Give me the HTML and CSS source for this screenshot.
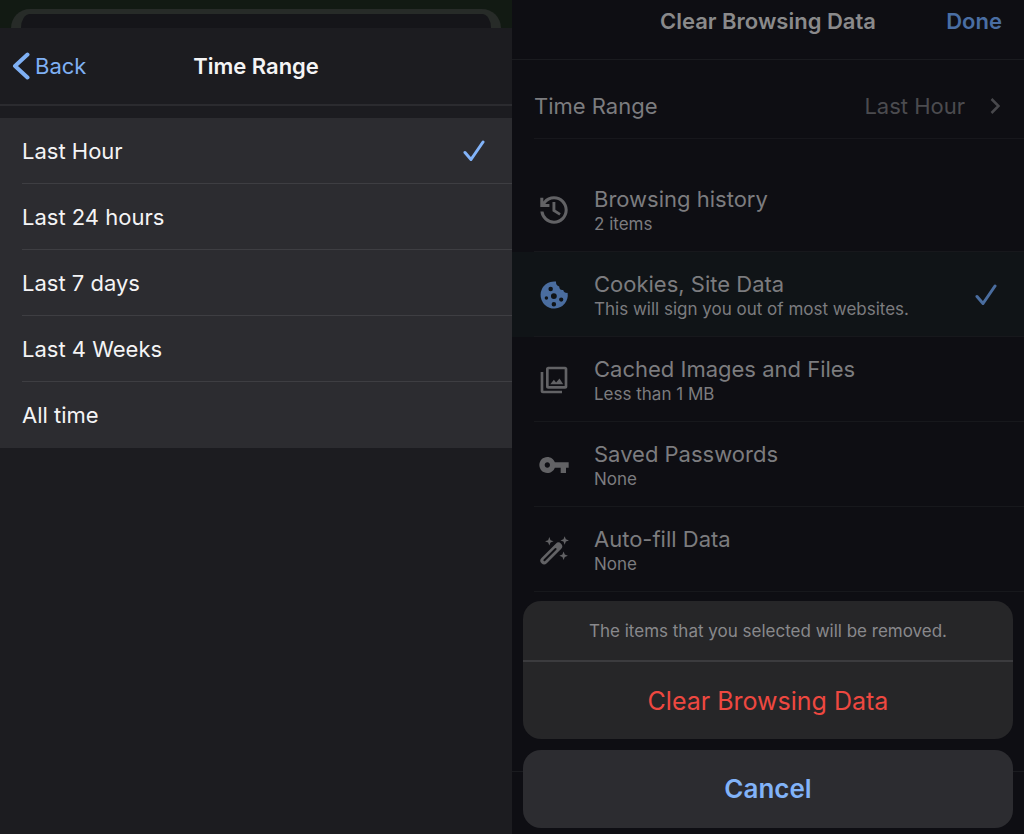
FILE: index.html
```html
<!DOCTYPE html>
<html lang="en">
<head>
    <meta charset="UTF-8">
    <meta name="viewport" content="width=device-width, initial-scale=1.0">
    <title>Clear Browsing Data</title>
    <link rel="stylesheet" href="styles.css">
</head>
<body>

    <section class="screen range-screen" id="range">
        <div class="backdrop"><div class="backdrop-card"></div></div>
        <header class="range-nav">
            <a class="back" href="#clear">
                <svg width="18" height="28" viewBox="0 0 18 28" aria-hidden="true"><path d="M15.5 2.5L3 14l12.5 11.5" fill="none" stroke="currentColor" stroke-width="4" stroke-linecap="round" stroke-linejoin="round"/></svg>
                Back
            </a>
            <h1>Time Range</h1>
        </header>
        <form class="range-list">
            <label class="range-row">
                <span>Last Hour</span>
                <input type="radio" name="range" checked>
                <svg class="tick" viewBox="0 0 22 22" aria-hidden="true"><path d="M2 12.5l6 7L20 2"/></svg>
            </label>
            <label class="range-row">
                <span>Last 24 hours</span>
                <input type="radio" name="range">
                <svg class="tick" viewBox="0 0 22 22" aria-hidden="true"><path d="M2 12.5l6 7L20 2"/></svg>
            </label>
            <label class="range-row">
                <span>Last 7 days</span>
                <input type="radio" name="range">
                <svg class="tick" viewBox="0 0 22 22" aria-hidden="true"><path d="M2 12.5l6 7L20 2"/></svg>
            </label>
            <label class="range-row">
                <span>Last 4 Weeks</span>
                <input type="radio" name="range">
                <svg class="tick" viewBox="0 0 22 22" aria-hidden="true"><path d="M2 12.5l6 7L20 2"/></svg>
            </label>
            <label class="range-row">
                <span>All time</span>
                <input type="radio" name="range">
                <svg class="tick" viewBox="0 0 22 22" aria-hidden="true"><path d="M2 12.5l6 7L20 2"/></svg>
            </label>
        </form>
    </section>

    <section class="screen clear-screen" id="clear">
        <header class="clear-nav">
            <h2>Clear Browsing Data</h2>
            <button class="done" type="button">Done</button>
        </header>
        <a class="range-link" href="#range">
            <span>Time Range</span>
            <span class="value">Last Hour</span>
            <svg width="10" height="18" viewBox="0 0 10 18" aria-hidden="true"><path d="M1.5 2l7 7-7 7" fill="none" stroke="currentColor" stroke-width="2.5"/></svg>
        </a>
        <form class="data-list">
            <label class="data-row">
                <svg class="icon" viewBox="60 -900 840 840" aria-hidden="true"><path d="M480-120q-138 0-240.5-91.5T122-440h82q14 104 92.500 172T480-200q117 0 198.500-81.500T760-480q0-117-81.500-198.500T480-760q-69 0-129 32t-101 88h110v80H120v-240h80v94q51-64 124.500-99T480-840q75 0 140.500 28.500t114 77q48.500 48.500 77 114T840-480q0 75-28.500 140.500t-77 114q-48.500 48.500-114 77T480-120ZM440-690h76v206l142 88-38 60-180-110z"/></svg>
                <span class="text">
                    <span class="name">Browsing history</span>
                    <span class="note">2 items</span>
                </span>
                <input type="checkbox">
                <svg class="tick" viewBox="0 0 22 22" aria-hidden="true"><path d="M2 12.5l6 7L20 2"/></svg>
            </label>
            <label class="data-row">
                <svg class="icon" viewBox="0 0 24 24" aria-hidden="true"><path fill-rule="evenodd" d="M22.2 10.4A10.2 10.2 0 1 1 13.5 1.9c-.2 2 .7 3.4 2.4 3.7.1 2 1.3 3 3 2.6.3 1.500 1.500 2.300 3.300 2.200zM9.500 5.800a1.700 1.700 0 1 0 0 3.400 1.700 1.700 0 0 0 0-3.400zM6.300 12.900a1.300 1.300 0 1 0 0 2.600 1.300 1.300 0 0 0 0-2.600zM11.900 10.600a2.200 2.200 0 1 0 0 4.400 2.200 2.200 0 0 0 0-4.400zM17.400 13.800a1.600 1.600 0 1 0 0 3.200 1.600 1.600 0 0 0 0-3.200zM11.900 17.200a1.700 1.700 0 1 0 0 3.400 1.700 1.700 0 0 0 0-3.400z"/></svg>
                <span class="text">
                    <span class="name">Cookies, Site Data</span>
                    <span class="note">This will sign you out of most websites.</span>
                </span>
                <input type="checkbox" checked>
                <svg class="tick" viewBox="0 0 22 22" aria-hidden="true"><path d="M2 12.5l6 7L20 2"/></svg>
            </label>
            <label class="data-row">
                <svg class="icon" viewBox="0 0 24 24" aria-hidden="true"><path d="M20 4v12.500H8V4h12m.3-2H7.700C6.700 2 6 2.700 6 3.700v13.100c0 1 .7 1.700 1.700 1.700h12.600c1 0 1.700-.7 1.700-1.700V3.700c0-1-.7-1.700-1.700-1.700zM9.200 15.200l2.700-3.300 1.700 2 2.500-3 2.800 4.300zM2 6v14.300c0 1 .7 1.700 1.700 1.700H18v-2H4V6z"/></svg>
                <span class="text">
                    <span class="name">Cached Images and Files</span>
                    <span class="note">Less than 1 MB</span>
                </span>
                <input type="checkbox">
                <svg class="tick" viewBox="0 0 22 22" aria-hidden="true"><path d="M2 12.5l6 7L20 2"/></svg>
            </label>
            <label class="data-row">
                <svg class="icon" viewBox="0 0 24 24" aria-hidden="true"><path d="M12.65 10C11.83 7.67 9.61 6 7 6c-3.31 0-6 2.69-6 6s2.69 6 6 6c2.61 0 4.83-1.67 5.65-4H17v4h4v-4h2v-4H12.65zM7 14c-1.1 0-2-.9-2-2s.9-2 2-2 2 .9 2 2-.9 2-2 2z"/></svg>
                <span class="text">
                    <span class="name">Saved Passwords</span>
                    <span class="note">None</span>
                </span>
                <input type="checkbox">
                <svg class="tick" viewBox="0 0 22 22" aria-hidden="true"><path d="M2 12.5l6 7L20 2"/></svg>
            </label>
            <label class="data-row">
                <svg class="icon" viewBox="0 0 24 24" aria-hidden="true">
                    <path d="M4.6 19.9L15.300 9.200" fill="none" stroke="#626265" stroke-width="5.600" stroke-linecap="round"/>
                    <path d="M4.800 19.700L13.200 11.300" fill="none" stroke="#0e0e13" stroke-width="1.500" stroke-linecap="round"/>
                    <path d="M8.500 2.300l.9 2.300 2.300.9-2.300.9-.9 2.300-.9-2.300-2.300-.9 2.300-.9zM20 1.600l.9 2.300 2.300.9-2.300.9-.9 2.300-.9-2.300-2.300-.9 2.300-.9zM19.200 13.100l.9 2.300 2.300.9-2.300.9-.9 2.300-.9-2.300-2.300-.9 2.300-.9z"/>
                </svg>
                <span class="text">
                    <span class="name">Auto-fill Data</span>
                    <span class="note">None</span>
                </span>
                <input type="checkbox">
                <svg class="tick" viewBox="0 0 22 22" aria-hidden="true"><path d="M2 12.5l6 7L20 2"/></svg>
            </label>
        </form>
        <div class="list-end"></div>

        <div class="sheet" role="dialog" aria-label="Clear Browsing Data">
            <div class="sheet-group">
                <p>The items that you selected will be removed.</p>
                <button class="danger" type="button">Clear Browsing Data</button>
            </div>
            <button class="cancel" type="button">Cancel</button>
        </div>
    </section>

</body>
</html>
```

FILE: styles.css
```css
* {
    box-sizing: border-box;
}

body {
    margin: 0;
    min-height: 100vh;
    display: grid;
    grid-template-columns: 1fr 1fr;
    background: #0e0e13;
    font-family: Inter, "Liberation Sans", sans-serif;
    font-size: 22px;
    line-height: 28px;
}

h1, h2, p {
    margin: 0;
}

h1, h2 {
    font-size: 22px;
    font-weight: 600;
}

a {
    color: inherit;
    text-decoration: none;
}

button {
    padding: 0;
    border: none;
    background: none;
    font: inherit;
    cursor: pointer;
}

input {
    appearance: none;
    position: absolute;
    margin: 0;
}

.tick {
    width: 22px;
    height: 22px;
    flex-shrink: 0;
    visibility: hidden;
    fill: none;
    stroke: #82b3f8;
    stroke-width: 3;
    stroke-linecap: round;
    stroke-linejoin: round;
}

input:checked + .tick {
    visibility: visible;
}

/* time range */
.range-screen {
    background: #1c1c20;
    color: #f4f4f5;
}

.backdrop {
    height: 28px;
    padding: 9px 11px 0;
    background: #121a13;
}

.backdrop-card {
    height: 19px;
    border: solid #272b28;
    border-width: 5px 10px 0;
    border-radius: 24px 24px 0 0;
    background: #151519;
}

.range-nav {
    display: grid;
    grid-template-columns: 1fr auto 1fr;
    align-items: center;
    height: 78px;
    padding: 0 12px;
    border-bottom: 2px solid #2b2b2f;
}

.back {
    display: flex;
    align-items: center;
    gap: 5px;
    color: #7fb0f4;
}

.range-list {
    margin-top: 12px;
    background: #2c2c30;
}

.range-row {
    display: flex;
    align-items: center;
    justify-content: space-between;
    height: 66px;
    margin-left: 22px;
    padding-right: 27px;
    border-bottom: 1px solid #3e3e42;
}

.range-row:last-child {
    border-bottom: none;
}

/* clear browsing data, dimmed under the sheet */
.clear-screen {
    position: relative;
    background: #0e0e13;
    color: #7c7c7f;
}

.clear-nav {
    display: grid;
    grid-template-columns: 1fr auto 1fr;
    height: 60px;
    padding: 7px 22px 0;
    border-bottom: 1px solid #1a1b1f;
}

.clear-nav h2 {
    grid-column: 2;
    color: #8a8a8b;
}

.done {
    align-self: start;
    justify-self: end;
    color: #4a6ea3;
    font-weight: 600;
}

.range-link {
    display: flex;
    align-items: center;
    height: 66px;
    margin: 13px 0 28px 22px;
    padding-right: 24px;
    border-bottom: 1px solid #17171c;
}

.range-link .value {
    margin-left: auto;
    margin-right: 25px;
    color: #4b4b4f;
}

.range-link svg {
    color: #48484c;
}

.data-row {
    display: flex;
    align-items: center;
    height: 85px;
    padding: 0 27px 0 26px;
    background: linear-gradient(#17181c, #17181c) 22px 100% / 100% 1px no-repeat;
}

.data-row:has(input:checked) {
    background-color: #101417;
}

.icon {
    width: 32px;
    height: 32px;
    flex-shrink: 0;
    margin-right: 24px;
    fill: #626265;
}

.data-row:has(input:checked) .icon {
    fill: #4a6d9f;
}

.text {
    flex: 1;
}

.name,
.note {
    display: block;
}

.note {
    font-size: 17px;
    line-height: 22px;
}

.data-row .tick {
    stroke: #4a6d9f;
}

.list-end {
    height: 180px;
    border-bottom: 1px solid #1a1b1f;
}

.sheet {
    position: absolute;
    left: 11px;
    right: 11px;
    bottom: 6px;
    display: flex;
    flex-direction: column;
    gap: 11px;
}

.sheet-group {
    overflow: hidden;
    border-radius: 18px;
    background: #262628;
    text-align: center;
}

.sheet-group p {
    padding: 19px 16px 18px;
    border-bottom: 2px solid #3b3b3e;
    color: #89898c;
    font-size: 17px;
    line-height: 22px;
}

.danger,
.cancel {
    display: block;
    width: 100%;
    height: 78px;
}

.danger {
    height: 77px;
    color: #ee4840;
    font-size: 25px;
}

.cancel {
    border-radius: 18px;
    background: #2c2c30;
    color: #82b3f8;
    font-size: 26px;
    font-weight: 600;
}
```
